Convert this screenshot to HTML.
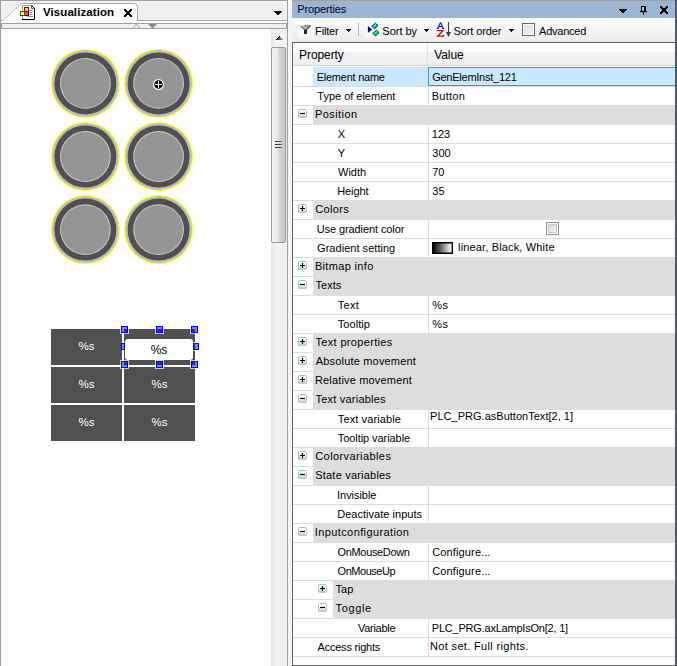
<!DOCTYPE html>
<html><head><meta charset="utf-8">
<style>
*{margin:0;padding:0;box-sizing:border-box}
html,body{width:677px;height:666px;overflow:hidden;background:#f0f0f0;font-family:"Liberation Sans",sans-serif;font-size:11px;color:#000}
.a{position:absolute}
.t{position:absolute;white-space:nowrap;line-height:19px;height:19px}
</style></head><body>
<!-- LEFT PANEL -->
<div class="a" style="left:0;top:0;width:288px;height:1px;background:#a0a0a0"></div>
<div class="a" style="left:0;top:0;width:1px;height:666px;background:#a0a0a0"></div>
<div class="a" style="left:287px;top:0;width:1px;height:666px;background:#a0a0a0"></div>
<svg class="a" style="left:0;top:0" width="288" height="30">
  <path d="M1 20.5 H2.5 L21.5 3.5 H134 Q137.5 3.5 137.5 7 V20.5 H287" fill="#fcfcfc" stroke="none"/>
  <path d="M1 20.5 H3 L21 4 H22" fill="none" stroke="#a0a0a0" stroke-width="1" stroke-dasharray="1.6 1.2"/>
  <path d="M21.5 3.5 H134 Q137.5 3.5 137.5 7 V20.5 H287" fill="none" stroke="#a8a8a8" stroke-width="1"/>
  <rect x="1" y="20.5" width="1.5" height="0.5" fill="#a8a8a8"/>
</svg>
<div class="a" style="left:1px;top:21px;width:286px;height:2px;background:#fcfcfc"></div>
<div class="a" style="left:1px;top:23px;width:286px;height:6px;background:#f0f0f0;border:1px solid #a0a0a0"></div>
<svg class="a" style="left:0;top:23px" width="288" height="6">
  <path d="M133 5 L136.5 1 L140 5" fill="none" stroke="#a0a0a0" stroke-width="1"/>
  <path d="M148 1 H157 L152.5 5.5 Z" fill="#8a8a8a"/>
</svg>
<!-- tab icon -->
<svg class="a" style="left:0;top:0" width="40" height="22">
  <path d="M22.5 19.5 V5.5 H31.5 L34.5 8.5 V19.5 Z" fill="#fff" stroke="none"/>
  <path d="M22.5 19.5 V5.5 H31.5" fill="none" stroke="#a0a0a0" stroke-width="1"/>
  <path d="M31.5 5.5 L34.5 8.5 V19.5 H22" fill="none" stroke="#000" stroke-width="1"/>
  <path d="M31.5 5.5 V8.5 H34.5" fill="none" stroke="#606060" stroke-width="1"/>
  <g stroke="#909090" stroke-width="1"><path d="M29.5 10.5h3M29.5 12.5h3M29.5 14.5h3M27 16.5h6"/></g>
  <rect x="24.5" y="7.5" width="4" height="4" fill="#ffd040" stroke="#900000" stroke-width="1"/>
  <rect x="25" y="12" width="4" height="4" fill="#0000a0"/>
  <rect x="25" y="12" width="3" height="3" fill="#ff4080"/>
  <rect x="20.5" y="11.5" width="4" height="4" fill="#ffff30" stroke="#008000" stroke-width="1"/>
</svg>
<div class="a" style="left:43px;top:3px;height:18px;line-height:18px;font-weight:bold;font-size:11.5px;letter-spacing:0.08px;color:#000">Visualization</div>
<svg class="a" style="left:124px;top:9px" width="8" height="8" shape-rendering="crispEdges"><rect x="0" y="0" width="2" height="1"/><rect x="6" y="0" width="2" height="1"/><rect x="0" y="1" width="3" height="1"/><rect x="5" y="1" width="3" height="1"/><rect x="1" y="2" width="6" height="1"/><rect x="2" y="3" width="4" height="1"/><rect x="2" y="4" width="4" height="1"/><rect x="1" y="5" width="6" height="1"/><rect x="0" y="6" width="3" height="1"/><rect x="5" y="6" width="3" height="1"/><rect x="0" y="7" width="2" height="1"/><rect x="6" y="7" width="2" height="1"/></svg>
<svg class="a" style="left:274px;top:11px" width="8" height="4" shape-rendering="crispEdges"><rect x="0" y="0" width="8" height="1"/><rect x="1" y="1" width="6" height="1"/><rect x="2" y="2" width="4" height="1"/><rect x="3" y="3" width="2" height="1"/></svg>
<!-- canvas -->
<div class="a" style="left:1px;top:29px;width:270px;height:637px;background:#fff"></div>
<!-- scrollbar -->
<div class="a" style="left:271px;top:29px;width:16px;height:637px;background:linear-gradient(90deg,#e8e8e8,#f2f2f2 30%,#f0f0f0)"></div>
<svg class="a" style="left:275px;top:35px" width="9" height="7" shape-rendering="crispEdges"><defs><linearGradient id="ua" x1="0" y1="0" x2="1" y2="0.6"><stop offset="0" stop-color="#000"/><stop offset="0.45" stop-color="#383838"/><stop offset="1" stop-color="#b8b8b8"/></linearGradient></defs><g fill="#fff"><rect x="4" y="0" width="1" height="1"/><rect x="3" y="1" width="1" height="1"/><rect x="5" y="1" width="1" height="1"/><rect x="2" y="2" width="1" height="1"/><rect x="6" y="2" width="1" height="1"/><rect x="1" y="3" width="1" height="1"/><rect x="7" y="3" width="1" height="1"/></g><rect x="1" y="5" width="7" height="1" fill="#fafafa"/><g fill="url(#ua)"><rect x="4" y="1" width="1" height="1"/><rect x="3" y="2" width="3" height="1"/><rect x="2" y="3" width="5" height="1"/><rect x="1" y="4" width="7" height="1"/></g><g fill="#000"><rect x="4" y="1" width="1" height="1"/><rect x="3" y="2" width="1" height="1"/><rect x="2" y="3" width="1" height="1"/><rect x="1" y="4" width="1" height="1"/></g></svg>
<div class="a" style="left:271px;top:47px;width:15px;height:196px;border:1px solid #979797;border-radius:2px;background:linear-gradient(90deg,#f4f4f4,#e9e9eb 45%,#d4d4d8 55%,#c8c8cd)"></div>
<div class="a" style="left:275px;top:141px;width:7px;height:1px;background:linear-gradient(90deg,#202020,#707070)"></div>
<div class="a" style="left:275px;top:144px;width:7px;height:1px;background:linear-gradient(90deg,#202020,#707070)"></div>
<div class="a" style="left:275px;top:147px;width:7px;height:1px;background:linear-gradient(90deg,#202020,#707070)"></div>

<!-- circles -->
<svg class="a" style="left:0;top:0" width="271" height="300">
  <defs>
    <g id="lamp">
      <circle r="34.5" fill="#ffff00"/>
      <circle r="33.3" fill="#bcbcc4"/>
      <circle r="31.0" fill="#505050"/>
      <circle r="25.4" fill="#c8c8c8"/>
      <circle r="24.4" fill="#959595"/>
    </g>
  </defs>
  <use href="#lamp" x="85.4" y="83.4"/>
  <use href="#lamp" x="158.6" y="83.4"/>
  <use href="#lamp" x="85.4" y="156.5"/>
  <use href="#lamp" x="158.6" y="156.5"/>
  <use href="#lamp" x="85.4" y="229.6"/>
  <use href="#lamp" x="158.6" y="229.6"/>
  <circle cx="158.5" cy="84.5" r="4.9" fill="#000" stroke="#fff" stroke-width="1.2"/>
  <path d="M158.5 81 V88 M155 84.5 H162" stroke="#fff" stroke-width="1"/>
</svg>

<!-- buttons -->
<div class="a" style="left:51px;top:329px;width:71px;height:36px;background:#505050;color:#fff;font-size:11.5px;text-align:center;line-height:34px">%s</div>
<div class="a" style="left:124px;top:329px;width:71px;height:36px;background:#505050"></div>
<div class="a" style="left:125px;top:339px;width:68px;height:21px;background:#fff;border-radius:3px;color:#000;font-size:12px;text-align:center;line-height:23px">%s</div>
<div class="a" style="left:51px;top:367px;width:71px;height:36px;background:#505050;color:#fff;font-size:11.5px;text-align:center;line-height:34px">%s</div>
<div class="a" style="left:124px;top:367px;width:71px;height:36px;background:#505050;color:#fff;font-size:11.5px;text-align:center;line-height:34px">%s</div>
<div class="a" style="left:51px;top:405px;width:71px;height:36px;background:#505050;color:#fff;font-size:11.5px;text-align:center;line-height:34px">%s</div>
<div class="a" style="left:124px;top:405px;width:71px;height:36px;background:#505050;color:#fff;font-size:11.5px;text-align:center;line-height:34px">%s</div>
<!-- handles -->
<svg class="a" style="left:0;top:0" width="271" height="400"><g fill="none" stroke="rgba(255,255,255,0.7)" stroke-width="1"><rect x="120.5" y="325.5" width="8" height="8"/><rect x="155.5" y="325.5" width="8" height="8"/><rect x="190.5" y="325.5" width="8" height="8"/><rect x="192.5" y="342.5" width="7" height="8"/><rect x="120.5" y="360.5" width="8" height="8"/><rect x="155.5" y="360.5" width="8" height="8"/><rect x="190.5" y="360.5" width="8" height="8"/></g><g fill="rgba(0,0,255,0.5)" stroke="#0000ff" stroke-width="1"><rect x="121.5" y="326.5" width="6" height="6"/><rect x="156.5" y="326.5" width="6" height="6"/><rect x="191.5" y="326.5" width="6" height="6"/><rect x="121.5" y="343.5" width="3" height="6"/><rect x="193.5" y="343.5" width="5" height="6"/><rect x="121.5" y="361.5" width="6" height="6"/><rect x="156.5" y="361.5" width="6" height="6"/><rect x="191.5" y="361.5" width="6" height="6"/></g></svg>


<!-- RIGHT PANEL -->
<div class="a" style="left:288px;top:0;width:4px;height:666px;background:#f5f5f5"></div>
<div class="a" style="left:292px;top:0;width:385px;height:1px;background:#a0a0a0"></div>
<div class="a" style="left:292px;top:1px;width:383px;height:17px;background:#9bb5d3"></div>
<div class="t" style="left:297.18px;top:0px;line-height:18px;height:18px;letter-spacing:-0.106px;color:#000018">Properties</div>
<svg class="a" style="left:619px;top:9px" width="8" height="4" shape-rendering="crispEdges"><rect x="0" y="0" width="8" height="1"/><rect x="1" y="1" width="6" height="1"/><rect x="2" y="2" width="4" height="1"/><rect x="3" y="3" width="2" height="1"/></svg>
<svg class="a" style="left:636px;top:2px" width="16" height="16"><path d="M5 4 H10 V9 H5 Z" fill="#000"/><path d="M6 5 H8 V8.7 H6 Z" fill="#b4ccec"/><path d="M4 9 H11 V10.2 H4 Z" fill="#000"/><path d="M7 10 H8 V12.7 H7 Z" fill="#000"/></svg>
<svg class="a" style="left:660px;top:6px" width="8" height="8" shape-rendering="crispEdges"><rect x="0" y="0" width="2" height="1"/><rect x="6" y="0" width="2" height="1"/><rect x="0" y="1" width="3" height="1"/><rect x="5" y="1" width="3" height="1"/><rect x="1" y="2" width="6" height="1"/><rect x="2" y="3" width="4" height="1"/><rect x="2" y="4" width="4" height="1"/><rect x="1" y="5" width="6" height="1"/><rect x="0" y="6" width="3" height="1"/><rect x="5" y="6" width="3" height="1"/><rect x="0" y="7" width="2" height="1"/><rect x="6" y="7" width="2" height="1"/></svg>
<div class="a" style="left:292px;top:18px;width:383px;height:24px;background:linear-gradient(#fdfdfd,#f4f4f4 50%,#ececec)"></div>
<div class="a" style="left:298px;top:22px;width:16px;height:16px;background:linear-gradient(#fefefe,#f6f6f6)"></div>
<svg class="a" style="left:296px;top:20px" width="20" height="20"><defs><linearGradient id="fg" x1="0" y1="0" x2="1" y2="0"><stop offset="0" stop-color="#e0e0e0"/><stop offset="1" stop-color="#707070"/></linearGradient></defs><path d="M4.5 5.8 L8 9.5 V14 H11 V9.5 L15 5.3 H8 Z" fill="url(#fg)"/><path d="M4.6 5.9 L8.2 9.6 M14.9 5.4 L11 9.6" stroke="#202020" stroke-width="1"/><path d="M8 9.5 H11 V14 H8 Z" fill="#2a2a2a"/><path d="M8 5.5 H14.5" stroke="#909090" stroke-width="1"/></svg>
<div class="t" style="left:315.08px;top:22px;line-height:18px;height:18px;letter-spacing:-0.17px">Filter</div>
<svg class="a" style="left:346px;top:29px" width="5" height="3" shape-rendering="crispEdges"><rect x="0" y="0" width="5" height="1"/><rect x="1" y="1" width="3" height="1"/><rect x="2" y="2" width="1" height="1"/></svg>
<div class="a" style="left:358px;top:23px;width:1px;height:13px;background:#b8b8b8"></div>
<div class="a" style="left:365px;top:22px;width:16px;height:16px;background:linear-gradient(#fefefe,#f6f6f6)"></div>
<svg class="a" style="left:362px;top:18px" width="22" height="22"><path d="M5.9 7.9 L10 11.5 L5.9 15.1 Z" fill="#000080"/><g stroke="#000" stroke-width="0.9" stroke-linejoin="miter"><path d="M13.4 5.2 L16 7.6 L12.4 10.8 L9.9 8.3 Z" fill="#00ffff"/><path d="M14.5 12.2 L17 14.6 L13.5 18 L10.9 15.4 Z" fill="#00ffff"/></g><path d="M15.4 7.9 L12.4 10.3 L11.6 9.5 L14.6 7.1Z" fill="#00b040"/><path d="M16.4 14.9 L13.5 17.4 L12.7 16.6 L15.6 14.1Z" fill="#00b040"/></svg>
<div class="t" style="left:382.35px;top:22px;line-height:18px;height:18px;letter-spacing:-0.025px">Sort by</div>
<svg class="a" style="left:424px;top:29px" width="5" height="3" shape-rendering="crispEdges"><rect x="0" y="0" width="5" height="1"/><rect x="1" y="1" width="3" height="1"/><rect x="2" y="2" width="1" height="1"/></svg>
<svg class="a" style="left:432px;top:18px" width="24" height="24"><g fill="none" stroke="#2424a8" stroke-width="1.2"><path d="M8.5 4.6 L5.6 10.5 M8.5 4.6 L11.4 10.5 M6.6 8.6 H10.4 M4.8 10.5 H7 M10 10.5 H12.2"/></g><g fill="none" stroke="#a81c1c" stroke-width="1.3"><path d="M5.5 12.9 V12.7 H11 L5.6 18.2 H11.5 V17"/></g><path d="M16.5 4 V15" stroke="#404040" stroke-width="1.1"/><path d="M14 14 H19 L16.5 19 Z" fill="#404040"/></svg>
<div class="t" style="left:453.45px;top:22px;line-height:18px;height:18px;letter-spacing:-0.103px">Sort order</div>
<svg class="a" style="left:509px;top:29px" width="5" height="3" shape-rendering="crispEdges"><rect x="0" y="0" width="5" height="1"/><rect x="1" y="1" width="3" height="1"/><rect x="2" y="2" width="1" height="1"/></svg>
<div class="a" style="left:522px;top:23px;width:13px;height:13px;border:1px solid #3d6ea5;box-shadow:inset 0 0 0 1px #fbfbfb;background:linear-gradient(135deg,#dcdcdc,#f4f4f4)"></div>
<div class="t" style="left:539.05px;top:22px;line-height:18px;height:18px;letter-spacing:-0.243px">Advanced</div>
<div class="a" style="left:292px;top:42px;width:384px;height:624px;background:#fff;border:1px solid #646464;border-right:none"></div>
<div class="a" style="left:293px;top:43px;width:382px;height:22px;background:linear-gradient(#ffffff 0,#ffffff 9px,#f2f2f4 9px,#eeeef2 100%)"></div>
<div class="a" style="left:293px;top:65px;width:382px;height:1px;background:#d8d8d8"></div>
<div class="a" style="left:427px;top:43px;width:1px;height:22px;background:#e2e2e2"></div>
<div class="t" style="left:299.05px;top:45px;font-size:12px;line-height:21px;height:21px;letter-spacing:-0.079px">Property</div>
<div class="t" style="left:434.22px;top:45px;font-size:12px;line-height:21px;height:21px;letter-spacing:-0.075px">Value</div>
<svg width="0" height="0" style="position:absolute"><defs><linearGradient id="eg" x1="0" y1="0" x2="0" y2="1"><stop offset="0" stop-color="#fff"/><stop offset="0.55" stop-color="#f4f4f4"/><stop offset="1" stop-color="#bdbdbd"/></linearGradient></defs></svg>
<div class="a" style="left:293px;top:86px;width:382px;height:1px;background:#dcdcdc"></div>
<div class="a" style="left:428px;top:66px;width:1px;height:20px;background:#dcdcdc"></div>
<div class="a" style="left:313px;top:67px;width:115px;height:19px;background:#cce8ff"></div>
<div class="a" style="left:428px;top:67px;width:248px;height:19px;background:#cce8ff;border:1px solid #3399ff"></div>
<div class="t" style="left:316.68px;top:68px;letter-spacing:-0.244px">Element name</div>
<div class="t" style="left:432.15px;top:68px;letter-spacing:-0.241px">GenElemInst_121</div>
<div class="a" style="left:293px;top:105px;width:382px;height:1px;background:#dcdcdc"></div>
<div class="a" style="left:428px;top:87px;width:1px;height:18px;background:#dcdcdc"></div>
<div class="t" style="left:317.3px;top:87px;letter-spacing:-0.012px">Type of element</div>
<div class="t" style="left:431.78px;top:87px;letter-spacing:0.26px">Button</div>
<div class="a" style="left:313px;top:106px;width:362px;height:19px;background:#dddddd"></div>
<div class="a" style="left:293px;top:124px;width:20px;height:1px;background:#dcdcdc"></div>
<svg class="a" style="left:298px;top:109px" width="10" height="10"><rect x="0.5" y="0.5" width="8" height="8" rx="1" fill="url(#eg)"/><path d="M0.5 8.5 V1.5 Q0.5 0.5 1.5 0.5 H8" fill="none" stroke="#8cc8cc" stroke-width="1"/><path d="M8.5 1.5 V7.5 Q8.5 8.5 7.5 8.5 H1.5" fill="none" stroke="#b8c8c8" stroke-width="1"/><path d="M2 4.5 H7" stroke="#000" stroke-width="1.15"/></svg>
<div class="t" style="left:314.88px;top:105px;letter-spacing:0.446px">Position</div>
<div class="a" style="left:293px;top:143px;width:382px;height:1px;background:#dcdcdc"></div>
<div class="a" style="left:428px;top:125px;width:1px;height:18px;background:#dcdcdc"></div>
<div class="t" style="left:337.8px;top:125px">X</div>
<div class="t" style="left:431.78px;top:125px">123</div>
<div class="a" style="left:293px;top:162px;width:382px;height:1px;background:#dcdcdc"></div>
<div class="a" style="left:428px;top:144px;width:1px;height:18px;background:#dcdcdc"></div>
<div class="t" style="left:337.8px;top:144px">Y</div>
<div class="t" style="left:432.28px;top:144px">300</div>
<div class="a" style="left:293px;top:181px;width:382px;height:1px;background:#dcdcdc"></div>
<div class="a" style="left:428px;top:163px;width:1px;height:18px;background:#dcdcdc"></div>
<div class="t" style="left:338.05px;top:163px;letter-spacing:-0.013px">Width</div>
<div class="t" style="left:432.15px;top:163px">70</div>
<div class="a" style="left:293px;top:200px;width:382px;height:1px;background:#dcdcdc"></div>
<div class="a" style="left:428px;top:182px;width:1px;height:18px;background:#dcdcdc"></div>
<div class="t" style="left:337.18px;top:182px;letter-spacing:-0.09px">Height</div>
<div class="t" style="left:432.28px;top:182px">35</div>
<div class="a" style="left:313px;top:201px;width:362px;height:19px;background:#dddddd"></div>
<div class="a" style="left:293px;top:219px;width:20px;height:1px;background:#dcdcdc"></div>
<svg class="a" style="left:298px;top:204px" width="10" height="10"><rect x="0.5" y="0.5" width="8" height="8" rx="1" fill="url(#eg)"/><path d="M0.5 8.5 V1.5 Q0.5 0.5 1.5 0.5 H8" fill="none" stroke="#8cc8cc" stroke-width="1"/><path d="M8.5 1.5 V7.5 Q8.5 8.5 7.5 8.5 H1.5" fill="none" stroke="#b8c8c8" stroke-width="1"/><path d="M2 4.5 H7 M4.5 2 V7" stroke="#000" stroke-width="1.15"/></svg>
<div class="t" style="left:315.25px;top:200px;letter-spacing:0.35px">Colors</div>
<div class="a" style="left:293px;top:238px;width:382px;height:1px;background:#dcdcdc"></div>
<div class="a" style="left:428px;top:220px;width:1px;height:18px;background:#dcdcdc"></div>
<div class="t" style="left:316.68px;top:220px;letter-spacing:-0.09px">Use gradient color</div>
<div class="a" style="left:546px;top:222px;width:13px;height:13px;border:1px solid #8e8f8f;background:#fff"></div>
<div class="a" style="left:548px;top:224px;width:9px;height:9px;border:1px solid #c4c8d0;background:linear-gradient(135deg,#d0d4dc,#f8f8f8)"></div>
<div class="a" style="left:293px;top:257px;width:382px;height:1px;background:#dcdcdc"></div>
<div class="a" style="left:428px;top:239px;width:1px;height:18px;background:#dcdcdc"></div>
<div class="t" style="left:317.05px;top:239px;letter-spacing:0.036px">Gradient setting</div>
<div class="a" style="left:432px;top:242px;width:21px;height:12px;border:1px solid #000;box-shadow:inset 0 0 0 0.4px #000;background:linear-gradient(90deg,#000,#fff)"></div>
<div class="t" style="left:458.1px;top:238px;letter-spacing:0.151px">linear, Black, White</div>
<div class="a" style="left:313px;top:258px;width:362px;height:19px;background:#dddddd"></div>
<div class="a" style="left:293px;top:276px;width:20px;height:1px;background:#dcdcdc"></div>
<svg class="a" style="left:298px;top:261px" width="10" height="10"><rect x="0.5" y="0.5" width="8" height="8" rx="1" fill="url(#eg)"/><path d="M0.5 8.5 V1.5 Q0.5 0.5 1.5 0.5 H8" fill="none" stroke="#8cc8cc" stroke-width="1"/><path d="M8.5 1.5 V7.5 Q8.5 8.5 7.5 8.5 H1.5" fill="none" stroke="#b8c8c8" stroke-width="1"/><path d="M2 4.5 H7 M4.5 2 V7" stroke="#000" stroke-width="1.15"/></svg>
<div class="t" style="left:314.88px;top:257px;letter-spacing:0.34px">Bitmap info</div>
<div class="a" style="left:313px;top:277px;width:362px;height:19px;background:#dddddd"></div>
<div class="a" style="left:293px;top:295px;width:20px;height:1px;background:#dcdcdc"></div>
<svg class="a" style="left:298px;top:280px" width="10" height="10"><rect x="0.5" y="0.5" width="8" height="8" rx="1" fill="url(#eg)"/><path d="M0.5 8.5 V1.5 Q0.5 0.5 1.5 0.5 H8" fill="none" stroke="#8cc8cc" stroke-width="1"/><path d="M8.5 1.5 V7.5 Q8.5 8.5 7.5 8.5 H1.5" fill="none" stroke="#b8c8c8" stroke-width="1"/><path d="M2 4.5 H7" stroke="#000" stroke-width="1.15"/></svg>
<div class="t" style="left:315.5px;top:276px;letter-spacing:0.031px">Texts</div>
<div class="a" style="left:293px;top:314px;width:382px;height:1px;background:#dcdcdc"></div>
<div class="a" style="left:428px;top:296px;width:1px;height:18px;background:#dcdcdc"></div>
<div class="t" style="left:337.8px;top:296px;letter-spacing:0.25px">Text</div>
<div class="t" style="left:432.28px;top:296px;letter-spacing:0.425px">%s</div>
<div class="a" style="left:293px;top:333px;width:382px;height:1px;background:#dcdcdc"></div>
<div class="a" style="left:428px;top:315px;width:1px;height:18px;background:#dcdcdc"></div>
<div class="t" style="left:337.8px;top:315px;letter-spacing:0.054px">Tooltip</div>
<div class="t" style="left:432.28px;top:315px;letter-spacing:0.425px">%s</div>
<div class="a" style="left:313px;top:334px;width:362px;height:19px;background:#dddddd"></div>
<div class="a" style="left:293px;top:352px;width:20px;height:1px;background:#dcdcdc"></div>
<svg class="a" style="left:298px;top:337px" width="10" height="10"><rect x="0.5" y="0.5" width="8" height="8" rx="1" fill="url(#eg)"/><path d="M0.5 8.5 V1.5 Q0.5 0.5 1.5 0.5 H8" fill="none" stroke="#8cc8cc" stroke-width="1"/><path d="M8.5 1.5 V7.5 Q8.5 8.5 7.5 8.5 H1.5" fill="none" stroke="#b8c8c8" stroke-width="1"/><path d="M2 4.5 H7 M4.5 2 V7" stroke="#000" stroke-width="1.15"/></svg>
<div class="t" style="left:315.5px;top:333px;letter-spacing:0.33px">Text properties</div>
<div class="a" style="left:313px;top:353px;width:362px;height:19px;background:#dddddd"></div>
<div class="a" style="left:293px;top:371px;width:20px;height:1px;background:#dcdcdc"></div>
<svg class="a" style="left:298px;top:356px" width="10" height="10"><rect x="0.5" y="0.5" width="8" height="8" rx="1" fill="url(#eg)"/><path d="M0.5 8.5 V1.5 Q0.5 0.5 1.5 0.5 H8" fill="none" stroke="#8cc8cc" stroke-width="1"/><path d="M8.5 1.5 V7.5 Q8.5 8.5 7.5 8.5 H1.5" fill="none" stroke="#b8c8c8" stroke-width="1"/><path d="M2 4.5 H7 M4.5 2 V7" stroke="#000" stroke-width="1.15"/></svg>
<div class="t" style="left:315.75px;top:352px;letter-spacing:0.181px">Absolute movement</div>
<div class="a" style="left:313px;top:372px;width:362px;height:19px;background:#dddddd"></div>
<div class="a" style="left:293px;top:390px;width:20px;height:1px;background:#dcdcdc"></div>
<svg class="a" style="left:298px;top:375px" width="10" height="10"><rect x="0.5" y="0.5" width="8" height="8" rx="1" fill="url(#eg)"/><path d="M0.5 8.5 V1.5 Q0.5 0.5 1.5 0.5 H8" fill="none" stroke="#8cc8cc" stroke-width="1"/><path d="M8.5 1.5 V7.5 Q8.5 8.5 7.5 8.5 H1.5" fill="none" stroke="#b8c8c8" stroke-width="1"/><path d="M2 4.5 H7 M4.5 2 V7" stroke="#000" stroke-width="1.15"/></svg>
<div class="t" style="left:314.88px;top:371px;letter-spacing:0.173px">Relative movement</div>
<div class="a" style="left:313px;top:391px;width:362px;height:19px;background:#dddddd"></div>
<div class="a" style="left:293px;top:409px;width:20px;height:1px;background:#dcdcdc"></div>
<svg class="a" style="left:298px;top:394px" width="10" height="10"><rect x="0.5" y="0.5" width="8" height="8" rx="1" fill="url(#eg)"/><path d="M0.5 8.5 V1.5 Q0.5 0.5 1.5 0.5 H8" fill="none" stroke="#8cc8cc" stroke-width="1"/><path d="M8.5 1.5 V7.5 Q8.5 8.5 7.5 8.5 H1.5" fill="none" stroke="#b8c8c8" stroke-width="1"/><path d="M2 4.5 H7" stroke="#000" stroke-width="1.15"/></svg>
<div class="t" style="left:315.5px;top:390px;letter-spacing:0.215px">Text variables</div>
<div class="a" style="left:293px;top:428px;width:382px;height:1px;background:#dcdcdc"></div>
<div class="a" style="left:428px;top:410px;width:1px;height:18px;background:#dcdcdc"></div>
<div class="t" style="left:337.8px;top:410px;letter-spacing:0.111px">Text variable</div>
<div class="t" style="left:430.08px;top:407px;letter-spacing:0.019px">PLC_PRG.asButtonText[2, 1]</div>
<div class="a" style="left:293px;top:447px;width:382px;height:1px;background:#dcdcdc"></div>
<div class="a" style="left:428px;top:429px;width:1px;height:18px;background:#dcdcdc"></div>
<div class="t" style="left:337.8px;top:429px;letter-spacing:-0.067px">Tooltip variable</div>
<div class="a" style="left:313px;top:448px;width:362px;height:19px;background:#dddddd"></div>
<div class="a" style="left:293px;top:466px;width:20px;height:1px;background:#dcdcdc"></div>
<svg class="a" style="left:298px;top:451px" width="10" height="10"><rect x="0.5" y="0.5" width="8" height="8" rx="1" fill="url(#eg)"/><path d="M0.5 8.5 V1.5 Q0.5 0.5 1.5 0.5 H8" fill="none" stroke="#8cc8cc" stroke-width="1"/><path d="M8.5 1.5 V7.5 Q8.5 8.5 7.5 8.5 H1.5" fill="none" stroke="#b8c8c8" stroke-width="1"/><path d="M2 4.5 H7 M4.5 2 V7" stroke="#000" stroke-width="1.15"/></svg>
<div class="t" style="left:315.25px;top:447px;letter-spacing:0.411px">Colorvariables</div>
<div class="a" style="left:313px;top:467px;width:362px;height:19px;background:#dddddd"></div>
<div class="a" style="left:293px;top:485px;width:20px;height:1px;background:#dcdcdc"></div>
<svg class="a" style="left:298px;top:470px" width="10" height="10"><rect x="0.5" y="0.5" width="8" height="8" rx="1" fill="url(#eg)"/><path d="M0.5 8.5 V1.5 Q0.5 0.5 1.5 0.5 H8" fill="none" stroke="#8cc8cc" stroke-width="1"/><path d="M8.5 1.5 V7.5 Q8.5 8.5 7.5 8.5 H1.5" fill="none" stroke="#b8c8c8" stroke-width="1"/><path d="M2 4.5 H7" stroke="#000" stroke-width="1.15"/></svg>
<div class="t" style="left:315.25px;top:466px;letter-spacing:0.204px">State variables</div>
<div class="a" style="left:293px;top:504px;width:382px;height:1px;background:#dcdcdc"></div>
<div class="a" style="left:428px;top:486px;width:1px;height:18px;background:#dcdcdc"></div>
<div class="t" style="left:337.05px;top:486px;letter-spacing:-0.04px">Invisible</div>
<div class="a" style="left:293px;top:523px;width:382px;height:1px;background:#dcdcdc"></div>
<div class="a" style="left:428px;top:505px;width:1px;height:18px;background:#dcdcdc"></div>
<div class="t" style="left:337.18px;top:505px;letter-spacing:0.031px">Deactivate inputs</div>
<div class="a" style="left:313px;top:524px;width:362px;height:19px;background:#dddddd"></div>
<div class="a" style="left:293px;top:542px;width:20px;height:1px;background:#dcdcdc"></div>
<svg class="a" style="left:298px;top:527px" width="10" height="10"><rect x="0.5" y="0.5" width="8" height="8" rx="1" fill="url(#eg)"/><path d="M0.5 8.5 V1.5 Q0.5 0.5 1.5 0.5 H8" fill="none" stroke="#8cc8cc" stroke-width="1"/><path d="M8.5 1.5 V7.5 Q8.5 8.5 7.5 8.5 H1.5" fill="none" stroke="#b8c8c8" stroke-width="1"/><path d="M2 4.5 H7" stroke="#000" stroke-width="1.15"/></svg>
<div class="t" style="left:314.75px;top:523px;letter-spacing:0.399px">Inputconfiguration</div>
<div class="a" style="left:293px;top:561px;width:382px;height:1px;background:#dcdcdc"></div>
<div class="a" style="left:428px;top:543px;width:1px;height:18px;background:#dcdcdc"></div>
<div class="t" style="left:337.55px;top:543px;letter-spacing:-0.34px">OnMouseDown</div>
<div class="t" style="left:432.15px;top:543px;letter-spacing:0.15px">Configure...</div>
<div class="a" style="left:293px;top:580px;width:382px;height:1px;background:#dcdcdc"></div>
<div class="a" style="left:428px;top:562px;width:1px;height:18px;background:#dcdcdc"></div>
<div class="t" style="left:337.55px;top:562px;letter-spacing:-0.466px">OnMouseUp</div>
<div class="t" style="left:432.15px;top:562px;letter-spacing:0.15px">Configure...</div>
<div class="a" style="left:333px;top:581px;width:342px;height:19px;background:#dddddd"></div>
<div class="a" style="left:293px;top:599px;width:382px;height:1px;background:#dcdcdc"></div>
<svg class="a" style="left:318px;top:584px" width="10" height="10"><rect x="0.5" y="0.5" width="8" height="8" rx="1" fill="url(#eg)"/><path d="M0.5 8.5 V1.5 Q0.5 0.5 1.5 0.5 H8" fill="none" stroke="#8cc8cc" stroke-width="1"/><path d="M8.5 1.5 V7.5 Q8.5 8.5 7.5 8.5 H1.5" fill="none" stroke="#b8c8c8" stroke-width="1"/><path d="M2 4.5 H7 M4.5 2 V7" stroke="#000" stroke-width="1.15"/></svg>
<div class="t" style="left:335.5px;top:580px;letter-spacing:0.062px">Tap</div>
<div class="a" style="left:333px;top:600px;width:342px;height:19px;background:#dddddd"></div>
<div class="a" style="left:293px;top:618px;width:382px;height:1px;background:#dcdcdc"></div>
<svg class="a" style="left:318px;top:603px" width="10" height="10"><rect x="0.5" y="0.5" width="8" height="8" rx="1" fill="url(#eg)"/><path d="M0.5 8.5 V1.5 Q0.5 0.5 1.5 0.5 H8" fill="none" stroke="#8cc8cc" stroke-width="1"/><path d="M8.5 1.5 V7.5 Q8.5 8.5 7.5 8.5 H1.5" fill="none" stroke="#b8c8c8" stroke-width="1"/><path d="M2 4.5 H7" stroke="#000" stroke-width="1.15"/></svg>
<div class="t" style="left:335.5px;top:599px;letter-spacing:0.64px">Toggle</div>
<div class="a" style="left:293px;top:637px;width:382px;height:1px;background:#dcdcdc"></div>
<div class="a" style="left:428px;top:619px;width:1px;height:18px;background:#dcdcdc"></div>
<div class="t" style="left:357.95px;top:619px;letter-spacing:-0.268px">Variable</div>
<div class="t" style="left:431.78px;top:619px;letter-spacing:-0.212px">PLC_PRG.axLampIsOn[2, 1]</div>
<div class="a" style="left:293px;top:656px;width:382px;height:1px;background:#dcdcdc"></div>
<div class="a" style="left:428px;top:638px;width:1px;height:18px;background:#dcdcdc"></div>
<div class="t" style="left:317.55px;top:638px;letter-spacing:-0.223px">Access rights</div>
<div class="t" style="left:430.08px;top:637px;letter-spacing:0.332px">Not set. Full rights.</div>
<div class="a" style="left:292px;top:665px;width:384px;height:1px;background:#646464"></div>
<div class="a" style="left:675px;top:0;width:2px;height:666px;background:#505860"></div>
</body></html>
